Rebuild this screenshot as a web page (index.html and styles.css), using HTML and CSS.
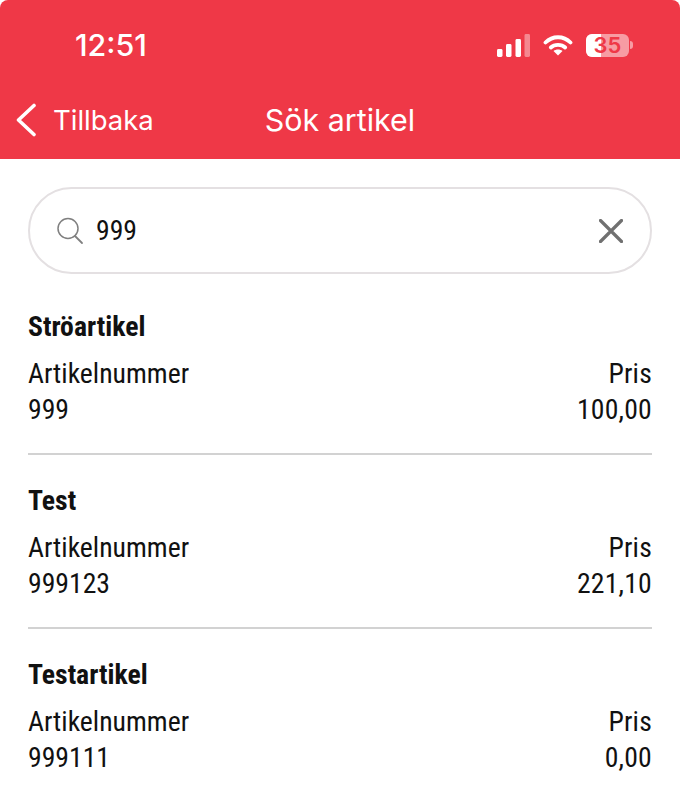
FILE: index.html
```html
<!DOCTYPE html>
<html lang="en">
<head>
    <meta charset="UTF-8">
    <meta name="viewport" content="width=device-width, initial-scale=1.0">
    <title>Sök artikel</title>
    <link rel="stylesheet" href="styles.css">
</head>
<body>

<header class="app-header">
    <div class="status-bar">
        <span class="clock">12:51</span>
        <div class="status-icons">
            <svg class="signal" width="33" height="23" viewBox="0 0 33 23">
                <rect x="0" y="15" width="5.500" height="8" rx="1.400" fill="#fff"/>
                <rect x="9" y="10" width="5.500" height="13" rx="1.400" fill="#fff"/>
                <rect x="18.500" y="5" width="5.500" height="18" rx="1.400" fill="#fff"/>
                <rect x="27.500" y="0" width="5.500" height="23" rx="1.400" fill="#fff" opacity="0.4"/>
            </svg>
            <svg class="wifi" width="30" height="22" viewBox="0 0 30 22">
                <path d="M2.500 8.500C9.500 1.500 20.500 1.500 27.500 8.500" fill="none" stroke="#fff" stroke-width="3.800" stroke-linecap="round"/>
                <path d="M7.800 13.500C11.500 10 18.500 10 22.200 13.500" fill="none" stroke="#fff" stroke-width="3.800" stroke-linecap="round"/>
                <path d="M15 21.500L10.500 17C13 15 17 15 19.500 17Z" fill="#fff"/>
            </svg>
            <div class="battery">
                <div class="battery-body">
                    <div class="battery-fill"></div>
                    <span class="battery-level">35</span>
                </div>
                <div class="battery-cap"></div>
            </div>
        </div>
    </div>
    <nav class="nav-bar">
        <a class="back-link" href="#">
            <svg width="22" height="34" viewBox="0 0 22 34">
                <path d="M19 2.500L3.500 17L19 31.500" fill="none" stroke="#fff" stroke-width="3.600" stroke-linecap="round" stroke-linejoin="round"/>
            </svg>
            <span>Tillbaka</span>
        </a>
        <h1>Sök artikel</h1>
    </nav>
</header>

<main class="content">
    <div class="search-box">
        <svg class="search-icon" width="28" height="28" viewBox="0 0 28 28">
            <circle cx="12" cy="11.500" r="10" fill="none" stroke="#808080" stroke-width="1.500"/>
            <path d="M19 19L26 26" stroke="#808080" stroke-width="1.800" stroke-linecap="round"/>
        </svg>
        <span class="search-value">999</span>
        <svg class="clear-icon" width="24" height="24" viewBox="0 0 24 24">
            <path d="M1.500 1.500L22.500 22.500M22.500 1.500L1.500 22.500" stroke="#707070" stroke-width="3.200" stroke-linecap="round"/>
        </svg>
    </div>

    <ul class="result-list">
        <li class="result">
            <strong>Ströartikel</strong>
            <div class="result-row"><span>Artikelnummer</span><span class="price">Pris</span></div>
            <div class="result-row"><span>999</span><span class="price">100,00</span></div>
        </li>
        <li class="result">
            <strong>Test</strong>
            <div class="result-row"><span>Artikelnummer</span><span class="price">Pris</span></div>
            <div class="result-row"><span>999123</span><span class="price">221,10</span></div>
        </li>
        <li class="result">
            <strong>Testartikel</strong>
            <div class="result-row"><span>Artikelnummer</span><span class="price">Pris</span></div>
            <div class="result-row"><span>999111</span><span class="price">0,00</span></div>
        </li>
    </ul>
</main>

</body>
</html>
```

FILE: styles.css
```css
body {
    margin: 0;
    height: 799px;
    overflow: hidden;
    background-color: #fff;
    font-family: "Roboto Condensed", Roboto, sans-serif;
    font-stretch: 75%;
    color: #111;
}

.app-header {
    height: 159px;
    background-color: #ef3847;
    border-radius: 8px 8px 0 0;
    color: #fff;
    font-family: Inter, "Noto Sans", sans-serif;
    font-stretch: normal;
}

.status-bar {
    height: 90px;
    display: flex;
    justify-content: space-between;
    align-items: center;
    padding: 0 47px 0 75px;
}

.clock {
    font-size: 30.400px;
    font-weight: 500;
}

.status-icons {
    display: flex;
    align-items: center;
    gap: 13px;
}

.battery {
    display: flex;
    align-items: center;
    gap: 1px;
}

.battery-body {
    position: relative;
    width: 43px;
    height: 23px;
    border-radius: 6px;
    overflow: hidden;
    background-color: #f79ca3;
    display: flex;
    justify-content: center;
    align-items: center;
}

.battery-fill {
    position: absolute;
    left: 0;
    top: 0;
    bottom: 0;
    width: 35%;
    background-color: #fff;
}

.battery-level {
    position: relative;
    font-size: 22px;
    line-height: 22px;
    font-weight: 600;
    color: #ef3847;
}

.battery-cap {
    width: 3px;
    height: 8px;
    border-radius: 0 4px 4px 0;
    background-color: #f79ca3;
}

.nav-bar {
    height: 60px;
    display: flex;
    align-items: center;
    padding-left: 15px;
}

.back-link {
    display: flex;
    align-items: center;
    gap: 16px;
    color: #fff;
    text-decoration: none;
    font-size: 27.500px;
}

.nav-bar h1 {
    margin: 0 0 0 111px;
    font-size: 30.400px;
    font-weight: 400;
}

.content {
    padding: 28px 28px 0;
}

.search-box {
    height: 87px;
    box-sizing: border-box;
    border: 2px solid #e4e0e2;
    border-radius: 44px;
    display: flex;
    align-items: center;
    padding: 0 27px 0 26px;
}

.search-icon {
    margin-right: 12px;
}

.search-value {
    flex: 1;
    font-size: 27.700px;
}

.result-list {
    list-style-type: none;
    margin: 7px 0 0;
    padding: 0;
}

.result {
    height: 174px;
    box-sizing: border-box;
    padding-top: 29px;
    border-bottom: 2px solid #d2d2d2;
    font-size: 27.700px;
}

.result:last-child {
    border-bottom: none;
}

.result strong {
    display: block;
    line-height: 34px;
    margin-bottom: 12px;
}

.result-row {
    display: flex;
    justify-content: space-between;
    line-height: 36px;
}

.price {
    letter-spacing: 0.200px;
}
```
